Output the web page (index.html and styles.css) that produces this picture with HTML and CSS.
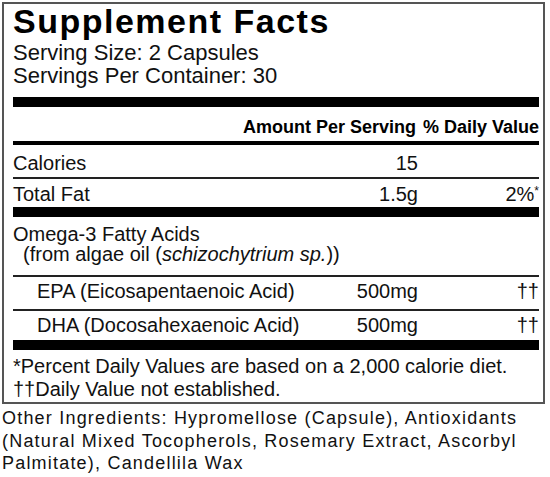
FILE: index.html
```html
<!DOCTYPE html>
<html lang="en">
<head>
    <meta charset="UTF-8">
    <meta name="viewport" content="width=device-width, initial-scale=1.0">
    <title>Supplement Facts</title>
    <link rel="stylesheet" href="styles.css">
</head>
<body>
    <div class="facts">
        <h1 class="title">Supplement Facts</h1>
        <div class="serving">
            <div>Serving Size: 2 Capsules</div>
            <div>Servings Per Container: 30</div>
        </div>

        <div class="bar thick"></div>

        <div class="head">
            <span class="head-amount">Amount Per Serving</span>
            <span class="dv">% Daily Value</span>
        </div>

        <div class="bar medium"></div>

        <div class="row calories">
            <span class="name">Calories</span>
            <span class="amount">15</span>
            <span class="dv"></span>
        </div>

        <div class="bar thin"></div>

        <div class="row fat">
            <span class="name">Total Fat</span>
            <span class="amount">1.5g</span>
            <span class="dv">2%<span class="star">*</span></span>
        </div>

        <div class="bar thick"></div>

        <div class="group">
            <div>Omega-3 Fatty Acids</div>
            <div class="source">(from algae oil (<i>schizochytrium sp.</i>))</div>
        </div>

        <div class="bar thin"></div>

        <div class="row sub epa">
            <span class="name">EPA (Eicosapentaenoic Acid)</span>
            <span class="amount">500mg</span>
            <span class="dv">††</span>
        </div>

        <div class="bar thin"></div>

        <div class="row sub dha">
            <span class="name">DHA (Docosahexaenoic Acid)</span>
            <span class="amount">500mg</span>
            <span class="dv">††</span>
        </div>

        <div class="bar thick"></div>

        <div class="notes">
            <div>*Percent Daily Values are based on a 2,000 calorie diet.</div>
            <div>††Daily Value not established.</div>
        </div>
    </div>

    <p class="ingredients">Other Ingredients: Hypromellose (Capsule), Antioxidants (Natural Mixed Tocopherols, Rosemary Extract, Ascorbyl Palmitate), Candellila Wax</p>
</body>
</html>
```

FILE: styles.css
```css
body {
    margin: 0;
    background-color: #fff;
    color: #111;
    font-family: "Liberation Sans", Arial, sans-serif;
    font-size: 20px;
    line-height: 22px;
}

.facts {
    width: 526px;
    margin: 2px 0 0 2px;
    padding: 1px 4px 1px 9px;
    border: 2px solid #555;
}

.title {
    margin: 0;
    font-size: 34px;
    line-height: 32px;
    font-weight: bold;
    letter-spacing: 1.5px;
    color: #000;
}

.serving {
    margin: 4px 0 10px;
    font-size: 22px;
    line-height: 23px;
}

.bar {
    background-color: #000;
}

.bar.thick {
    height: 10px;
}

.bar.medium {
    height: 4px;
}

.bar.thin {
    height: 2px;
    background-color: #222;
}

.head {
    display: flex;
    justify-content: flex-end;
    padding: 10px 0 4px;
    font-size: 18px;
    line-height: 20px;
    font-weight: bold;
    color: #000;
    white-space: nowrap;
}

.head-amount {
    padding-right: 7px;
}

.row {
    display: flex;
}

.row .name {
    flex: 1;
    white-space: nowrap;
}

.row .amount {
    width: 90px;
    text-align: right;
}

.dv {
    width: 121px;
    text-align: right;
}

.head .dv {
    width: auto;
}

.calories {
    padding: 7px 0 3px;
}

.fat {
    padding: 4px 0 2px;
}

.star {
    font-size: 12px;
    vertical-align: 6px;
    line-height: 0;
}

.group {
    padding: 7px 0 11px;
    line-height: 20px;
}

.group .source {
    padding-left: 10px;
}

.sub {
    padding: 3px 0 7px;
}

.sub .name {
    padding-left: 24px;
}

.dha {
    padding: 3px 0 4px;
}

.notes {
    padding-top: 5px;
    line-height: 23px;
}

.ingredients {
    width: 540px;
    margin: 3px 0 0 2px;
    font-size: 18px;
    line-height: 22.5px;
    letter-spacing: 1.2px;
    color: #111;
}
```
